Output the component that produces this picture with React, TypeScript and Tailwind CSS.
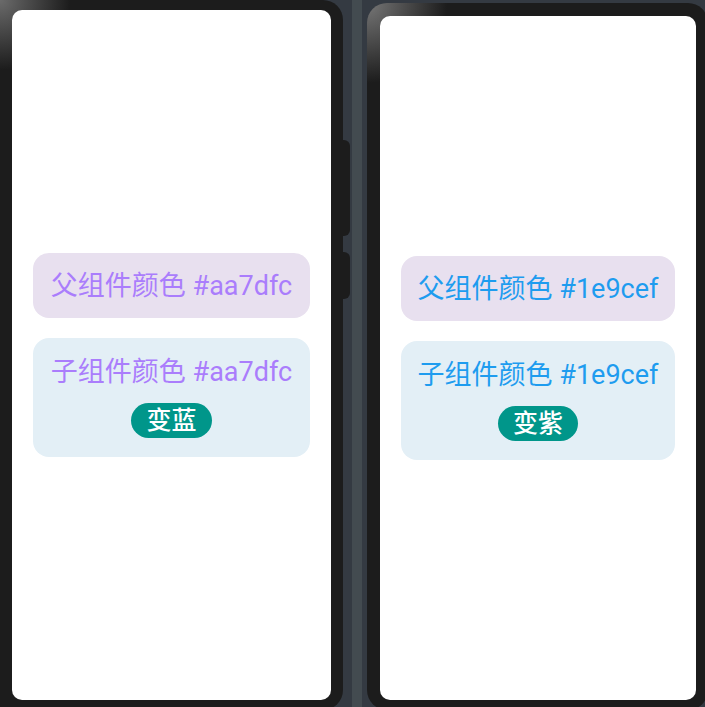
import React from 'react';

interface PanelProps {
  color: string;
  buttonLabel: string;
}

const ColorPanel: React.FC<PanelProps> = ({ color, buttonLabel }) => {
  return (
    <div className="flex flex-col items-center gap-5">
      <div className="w-full h-[65px] rounded-[16px] bg-[#e8e0ef] flex items-center justify-center">
        <span className="text-[27px] leading-[32px]" style={{ color }}>
          父组件颜色 {color}
        </span>
      </div>
      <div className="w-full rounded-[16px] bg-[#e3eff6] flex flex-col items-center pt-[18px] pb-[19px] gap-[15px]">
        <span className="text-[27px] leading-[32px]" style={{ color }}>
          子组件颜色 {color}
        </span>
        <button className="h-[35px] px-[15px] rounded-full bg-[#00968a] text-white text-[25px] leading-none font-medium">
          {buttonLabel}
        </button>
      </div>
    </div>
  );
};

export default function App() {
  return (
    <div
      className="w-[705px] h-[707px] overflow-hidden bg-[#343a42] flex"
      style={{ fontFamily: 'Roboto, "Noto Sans CJK SC", sans-serif' }}
    >
      {/* left device */}
      <div className="relative w-[343px] h-[710px] shrink-0 rounded-tr-[20px] rounded-br-[20px] bg-[radial-gradient(circle_at_0_0,#6b6b6b,#1c1c1c_70px),radial-gradient(circle_at_100%_100%,#9a9a9a,#1c1c1c_45px)] bg-[#1c1c1c] pl-[12px] pr-[12px] pt-[10px]">
        <div className="h-[690px] bg-white rounded-[10px] flex flex-col justify-center px-[21px]">
          <ColorPanel color="#aa7dfc" buttonLabel="变蓝" />
        </div>
        <div className="absolute -right-[7px] top-[140px] w-[8px] h-[96px] rounded-r-[6px] bg-[#1c1c1c]" />
        <div className="absolute -right-[7px] top-[252px] w-[8px] h-[47px] rounded-r-[6px] bg-[#1c1c1c]" />
      </div>

      {/* gap between devices */}
      <div className="w-[24px] shrink-0 flex pl-[9px]">
        <div className="w-[10px] h-full bg-[#434b50]" />
      </div>

      {/* right device */}
      <div className="mt-[3px] w-[341px] h-[707px] shrink-0 rounded-[20px] bg-[radial-gradient(circle_at_0_0,#777,#1c1c1c_80px),radial-gradient(circle_at_100%_100%,#9a9a9a,#1c1c1c_45px)] bg-[#1c1c1c] pl-[13px] pt-[13px]">
        <div className="w-[316px] h-[684px] bg-white rounded-[10px] flex flex-col justify-center px-[21px]">
          <ColorPanel color="#1e9cef" buttonLabel="变紫" />
        </div>
      </div>
    </div>
  );
}
